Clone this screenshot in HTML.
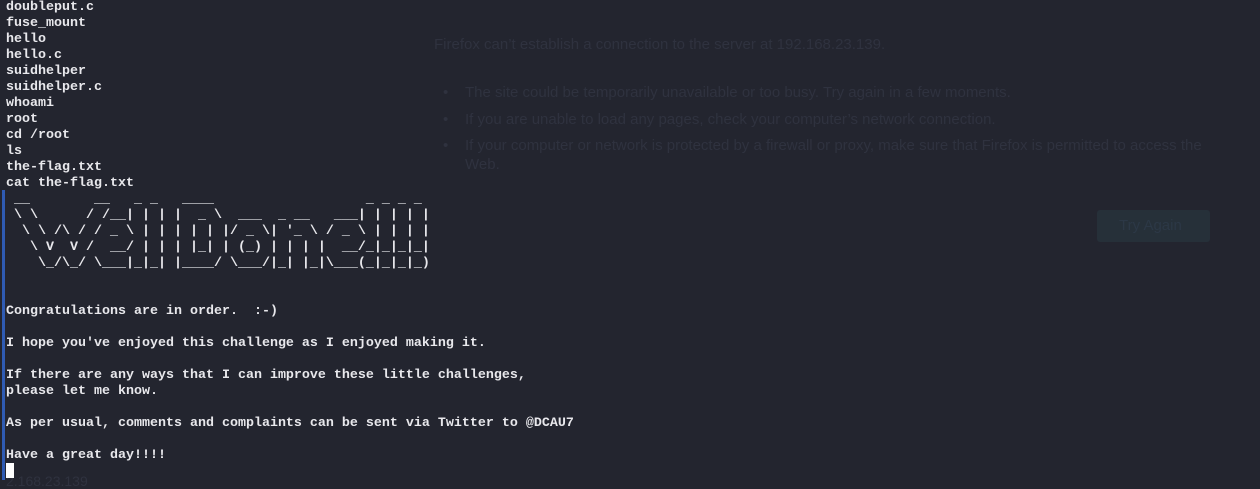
<!DOCTYPE html>
<html><head><style>
html,body{margin:0;padding:0;width:1260px;height:489px;overflow:hidden;background:#23252f;}
.ff{position:absolute;font-family:"Liberation Sans",sans-serif;font-size:15px;color:#2f323f;white-space:nowrap;}
.btn{position:absolute;left:1097px;top:210px;width:113px;height:32px;background:#263039;border-radius:3px;}
.btn span{position:absolute;left:22px;top:7px;font-family:"Liberation Sans",sans-serif;font-size:15px;color:#2c3846;}
pre{position:absolute;left:6px;top:0px;margin:0;font-family:"Liberation Mono",monospace;font-weight:bold;font-size:13.33px;line-height:16px;color:#e8e8ec;}
.bar{position:absolute;left:2px;top:190px;width:3px;height:290px;background:#2f5bb3;}
.cur{position:absolute;left:6px;top:463px;width:8px;height:15px;background:#fff;}
</style></head><body>
<div class="ff" style="left:434px;top:36px">Firefox can’t establish a connection to the server at 192.168.23.139.</div>
<div class="ff" style="left:443px;top:84px">•</div>
<div class="ff" style="left:465px;top:84px">The site could be temporarily unavailable or too busy. Try again in a few moments.</div>
<div class="ff" style="left:443px;top:111px">•</div>
<div class="ff" style="left:465px;top:111px">If you are unable to load any pages, check your computer’s network connection.</div>
<div class="ff" style="left:443px;top:137px">•</div>
<div class="ff" style="left:465px;top:137px">If your computer or network is protected by a firewall or proxy, make sure that Firefox is permitted to access the</div>
<div class="ff" style="left:465px;top:156px">Web.</div>
<div class="btn"><span>Try Again</span></div>
<div class="ff" style="left:6px;top:473px;font-size:14px">2.168.23.139</div>
<div class="bar"></div>
<pre>doubleput.c
fuse_mount
hello
hello.c
suidhelper
suidhelper.c
whoami
root
cd /root
ls
the-flag.txt
cat the-flag.txt
 __        __   _ _   ____                   _ _ _ _ 
 \ \      / /__| | | |  _ \  ___  _ __   ___| | | | |
  \ \ /\ / / _ \ | | | | | |/ _ \| '_ \ / _ \ | | | |
   \ V  V /  __/ | | | |_| | (_) | | | |  __/_|_|_|_|
    \_/\_/ \___|_|_| |____/ \___/|_| |_|\___(_|_|_|_)


Congratulations are in order.  :-)

I hope you've enjoyed this challenge as I enjoyed making it.

If there are any ways that I can improve these little challenges,
please let me know.

As per usual, comments and complaints can be sent via Twitter to @DCAU7

Have a great day!!!!
</pre>
<div class="cur"></div>
</body></html>
